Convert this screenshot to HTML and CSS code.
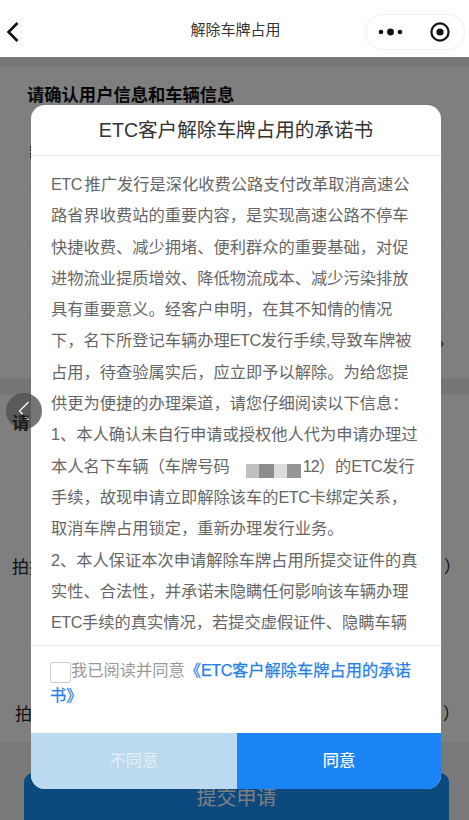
FILE: index.html
```html
<!DOCTYPE html>
<html lang="zh-CN">
<head>
<meta charset="utf-8">
<title>解除车牌占用</title>
<link rel="stylesheet" href="styles.css">
</head>
<body>
<div class="page">
  <header class="nav">
    <svg class="nav-back" width="14" height="22" viewBox="0 0 14 22"><path d="M11.5 2 L2.5 11 L11.5 20" fill="none" stroke="#111" stroke-width="2.6"/></svg>
    <h1 class="nav-title">解除车牌占用</h1>
    <div class="capsule">
      <svg width="26" height="8" viewBox="0 0 26 8"><circle cx="3" cy="4" r="2.3" fill="#111"/><circle cx="12.5" cy="4" r="3.4" fill="#111"/><circle cx="22" cy="4" r="2.3" fill="#111"/></svg>
      <svg width="20" height="20" viewBox="0 0 20 20"><circle cx="10" cy="10" r="8.6" fill="none" stroke="#111" stroke-width="2.2"/><circle cx="10" cy="10" r="3.6" fill="#111"/></svg>
    </div>
  </header>
  <main class="content">
    <section class="info">
      <h2 class="info-title">请确认用户信息和车辆信息</h2>
      <div class="info-row info-row-1"><span class="tick"></span></div>
      <div class="info-row info-row-2"></div>
      <div class="info-row info-row-3"></div>
      <div class="info-row info-row-4">
        <svg class="row-arrow" width="5" height="10" viewBox="0 0 5 10"><path d="M0.5 1 L4 5 L0.5 9" fill="none" stroke="#555" stroke-width="1.2"/></svg>
      </div>
    </section>
    <section class="photos">
      <h2 class="photos-title">请：</h2>
      <p class="photo-a"><span>拍摄</span><span>）</span></p>
      <p class="photo-b"><span>拍</span><span>）</span></p>
    </section>
    <div class="footer">
      <div class="submit">提交申请</div>
    </div>
  </main>

  <div class="mask"></div>

  <div class="modal">
    <h2 class="modal-title">ETC客户解除车牌占用的承诺书</h2>
    <div class="modal-body">
      <span class="latin">ETC</span> 推广发行是深化收费公路支付改革取消高速公<br>
      路省界收费站的重要内容，是实现高速公路不停车<br>
      快捷收费、减少拥堵、便利群众的重要基础，对促<br>
      进物流业提质增效、降低物流成本、减少污染排放<br>
      具有重要意义。经客户申明，在其不知情的情况<br>
      下，名下所登记车辆办理<span class="latin">ETC</span>发行手续,导致车牌被<br>
      占用，待查验属实后，应立即予以解除。为给您提<br>
      供更为便捷的办理渠道，请您仔细阅读以下信息：<br>
      1、本人确认未自行申请或授权他人代为申请办理过<br>
      本人名下车辆（车牌号码<span class="mosaic"></span><span class="digits">12</span>）的<span class="latin">ETC</span>发行<br>
      手续，故现申请立即解除该车的<span class="latin">ETC</span>卡绑定关系，<br>
      取消车牌占用锁定，重新办理发行业务。<br>
      2、本人保证本次申请解除车牌占用所提交证件的真<br>
      实性、合法性，并承诺未隐瞒任何影响该车辆办理<br>
      <span class="latin">ETC</span>手续的真实情况，若提交虚假证件、隐瞒车辆
    </div>
    <div class="agree">
      <span class="check"></span>我已阅读并同意<a class="agree-link">《<span class="latin">ETC</span>客户解除车牌占用的承诺书》</a>
    </div>
    <div class="actions">
      <div class="btn btn-no">不同意</div>
      <div class="btn btn-yes">同意</div>
    </div>
  </div>

  <div class="float-back">
    <svg width="14" height="24" viewBox="0 0 14 24"><path d="M11.5 3 L2.5 12 L11.5 21" fill="none" stroke="#fff" stroke-width="1.2"/></svg>
  </div>
</div>
</body>
</html>
```
FILE: styles.css
```css
* { box-sizing: border-box; }
html, body { margin: 0; padding: 0; }
body { font-family: "Liberation Sans", "Noto Sans CJK SC", sans-serif; }
.page { position: relative; width: 469px; height: 820px; overflow: hidden; background: #fff; }

.nav { height: 57px; padding: 6px 4px 0 6px; display: flex; align-items: center; position: relative; background: #fff; }
.nav-title { position: absolute; left: 2px; right: 0; top: 20px; margin: 0; text-align: center; font-size: 15px; line-height: 20px; font-weight: 400; color: #333; }
.capsule { margin-left: auto; width: 100px; height: 36px; border: 1px solid #eee; border-radius: 18px; display: flex; align-items: center; justify-content: space-between; padding: 0 14px 0 12px; }

.content { height: 763px; display: flex; flex-direction: column; }
.info { height: 321px; flex: none; border-top: 9px solid #ececec; padding: 17px 0 0 27px; display: flex; flex-direction: column; }
.info-title { margin: 0; font-size: 17.3px; line-height: 24px; font-weight: 700; color: #111; }
.info-row { display: flex; align-items: center; border-bottom: 1px solid #ececec; margin-right: 24px; }
.info-row-1 { height: 79px; padding-top: 12px; }
.info-row-2 { height: 62px; }
.info-row-3 { height: 65px; }
.info-row-4 { flex: 1; border-bottom: 0; justify-content: flex-end; }
.tick { display: block; width: 1px; height: 12px; margin-left: 3px; border-left: 2px dotted #333; }
.row-arrow { margin: 0 1px 4px 0; }

.photos { flex: 1; border-top: 17px solid #ececec; }
.photos-title { position: relative; z-index: 5; width: 31px; overflow: hidden; white-space: nowrap; margin: 16px 0 0; padding-left: 12px; font-size: 17.3px; line-height: 24px; font-weight: 700; color: #1c1c1c; }
.photo-a, .photo-b { margin: 0; display: flex; justify-content: space-between; font-size: 17px; line-height: 24px; color: #222; }
.photo-a { margin-top: 121px; padding: 0 8px 0 12px; }
.photo-b { margin-top: 123px; padding: 0 9px 0 15px; }
.footer { height: 78px; flex: none; padding: 31px 20px 0 24px; background: #f2f2f2; }
.submit { height: 47px; border-radius: 9px 9px 0 0; background: #1692ff; color: #fff; font-size: 20px; line-height: 50px; text-align: center; }

.mask { position: absolute; left: 0; right: 0; top: 57px; bottom: 0; background: rgba(0,0,0,0.5); }

.modal { position: absolute; left: 31px; top: 105px; width: 410px; height: 684px; background: #fff; border-radius: 14px; overflow: hidden; display: flex; flex-direction: column; }
.modal-title { height: 51px; flex: none; margin: 0; border-bottom: 1px solid #e6e6e6; text-align: center; font-size: 19.6px; line-height: 50px; font-weight: 400; color: #333; }
.modal-body { height: 490px; flex: none; overflow: hidden; padding: 13px 0 0 20px; font-size: 16.25px; line-height: 31.3px; color: #666; white-space: nowrap; word-spacing: -2px; border-bottom: 1px solid #e6e6e6; }
.latin { letter-spacing: -0.5px; }
.digits { letter-spacing: -1px; }
.mosaic { display: inline-block; width: 55px; height: 14px; margin: 0 2px 0 16px; vertical-align: -6px; background: linear-gradient(90deg, #c0c0c0 0 24%, #8c8c8c 24% 50%, #dcdcdc 50% 75%, #969696 75% 100%); }
.agree { flex: 1; padding: 12px 20px 0 19px; font-size: 16.25px; line-height: 24px; color: #999; }
.check { display: inline-block; width: 21px; height: 21px; vertical-align: -7px; border: 1px solid #ccc; border-radius: 2px; background: #fff; }
.agree-link { color: #2680e6; -webkit-text-stroke: 0.25px #2680e6; }
.actions { height: 56px; flex: none; display: flex; }
.btn { font-size: 16.25px; line-height: 55px; text-align: center; color: #fff; }
.btn-no { width: 206px; background: #bbd9ef; color: #e6f0f8; }
.btn-yes { flex: 1; background: #1a84f5; -webkit-text-stroke: 0.2px #fff; }

.float-back { position: absolute; z-index: 3; left: 6px; top: 393px; width: 36px; height: 36px; border-radius: 50%; background: rgba(80,80,80,0.79); display: flex; align-items: center; justify-content: center; }
```
